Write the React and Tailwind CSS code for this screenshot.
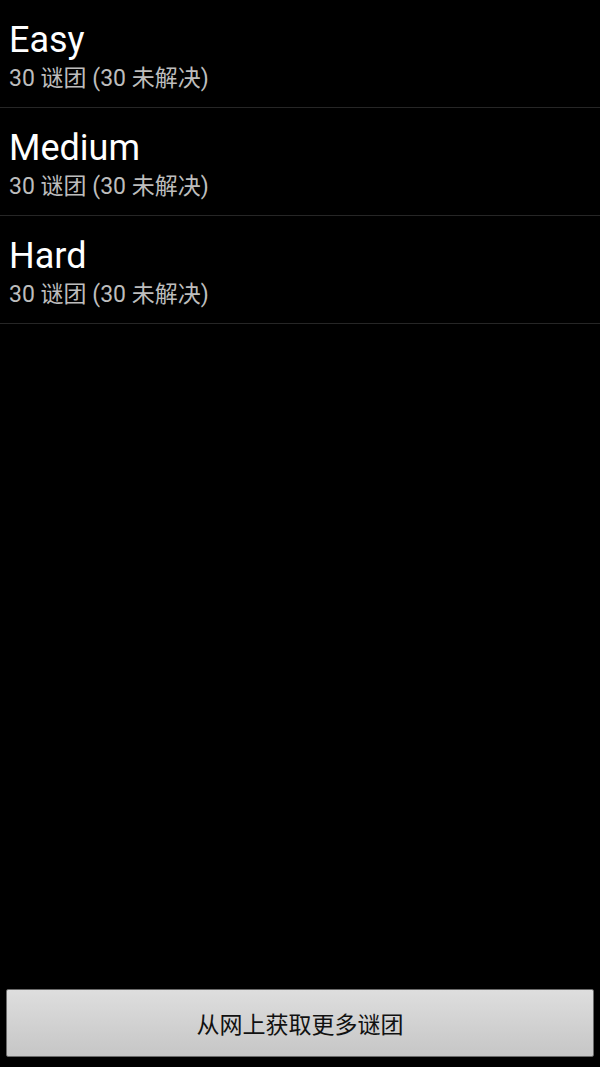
export default function App() {
  const rows = ["Easy", "Medium", "Hard"];
  return (
    <div className="w-[600px] h-[1067px] bg-black flex flex-col" style={{ fontFamily: 'Roboto, "Noto Sans CJK SC", sans-serif' }}>
      <div className="flex-1 flex flex-col">
        {rows.map((r) => (
          <div key={r} className="h-[108px] border-b border-[#262626] px-[9px] pt-[18px] flex flex-col">
            <div className="text-[36px] leading-[44px] text-white">{r}</div>
            <div className="text-[23px] leading-[28px] text-[#bdbdbd] mt-[3px]">30 谜团 (30 未解决)</div>
          </div>
        ))}
      </div>
      <div className="px-[6px] pb-[10px]">
        <button className="w-full h-[68px] border border-[#6a6a6a] rounded-[2px] bg-gradient-to-b from-[#dedede] to-[#c6c6c6] text-[23px] text-[#111] flex items-center justify-center" style={{ fontFamily: '"Noto Sans CJK SC", sans-serif' }}>
          从网上获取更多谜团
        </button>
      </div>
    </div>
  );
}
